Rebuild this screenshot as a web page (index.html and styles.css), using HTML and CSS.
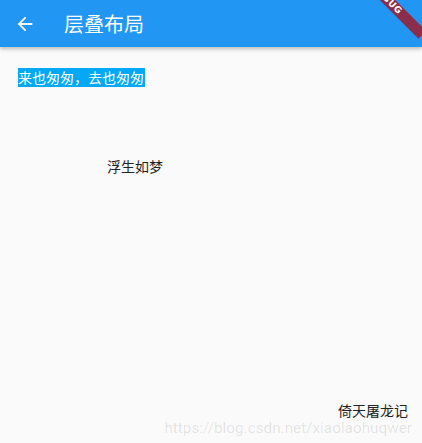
FILE: index.html
```html
<!DOCTYPE html>
<html>
<head>
<meta charset="utf-8">
<link rel="stylesheet" href="styles.css">
</head>
<body>
<div class="app">
  <header class="bar">
    <svg class="back" width="24" height="24" viewBox="0 0 24 24"><path d="M20 11H7.83l5.59-5.59L12 4l-8 8 8 8 1.41-1.41L7.83 13H20v-2z" fill="#fff"/></svg>
    <span class="title">层叠布局</span>
  </header>
  <main class="stack">
    <span class="tag">来也匆匆，去也匆匆</span>
    <span class="mid">浮生如梦</span>
    <span class="br">倚天屠龙记</span>
    <span class="wm">https://blog.csdn.net/xiaolaohuqwer</span>
  </main>
  <div class="banner"><span>DEBUG</span></div>
</div>
</body>
</html>
```
FILE: styles.css
```css
html, body { margin: 0; padding: 0; }
body {
  width: 422px; height: 443px; overflow: hidden;
  background: #fafafa;
  font-family: "Noto Sans CJK SC", "Roboto", sans-serif;
}
.app { position: relative; width: 422px; height: 443px; overflow: hidden; }
.bar {
  height: 47px; background: #2196f3;
  display: flex; align-items: center;
  box-shadow: 0 2px 4px rgba(0,0,0,0.25);
  position: relative; z-index: 1;
}
.back { margin-left: 14px; width: 22px; height: 22px; }
.title { margin-left: 28px; color: #fff; font-size: 20px; line-height: 1; }
.stack { position: relative; height: 396px; }
.tag {
  position: absolute; left: 18px; top: 21px;
  background: #03a9f4; color: #fff; font-size: 14px; line-height: 19px;
  padding-right: 1px;
}
.mid { position: absolute; left: 107px; top: 110px; font-size: 14px; color: #222; line-height: 19px; }
.br { position: absolute; right: 14px; top: 354px; font-size: 14px; color: #222; line-height: 19px; }
.wm {
  position: absolute; right: 10px; top: 372px;
  font-family: "Roboto", sans-serif; font-size: 15.3px; color: rgba(0,0,0,0.1); line-height: 18px;
}
.banner {
  position: absolute; top: 0; right: 0; width: 70px; height: 70px; overflow: hidden; z-index: 2;
}
.banner span {
  position: absolute; top: -6.5px; left: -15px; width: 100px; height: 11px;
  background: #8b2e4b; color: #fff;
  font-family: "DejaVu Sans", sans-serif; font-weight: bold; font-size: 9px; line-height: 11px;
  text-align: center; transform: rotate(45deg); letter-spacing: 0.5px;
}
```
